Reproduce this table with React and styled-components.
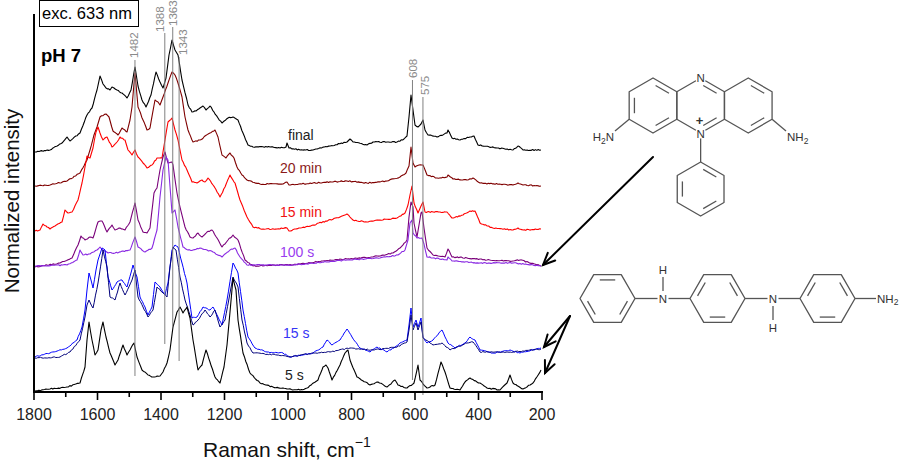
import React from "react";
import styled, { createGlobalStyle } from "styled-components";

const GlobalStyle = createGlobalStyle`
  html, body {
    margin: 0;
    padding: 0;
    background: #fff;
  }
`;

const FONT = `"Liberation Sans", Arial, sans-serif`;

const Figure = styled.div`
  position: relative;
  width: 899px;
  height: 460px;
  display: flex;
  background: #fff;
  font-family: ${FONT};
  overflow: hidden;
`;

const ChartPanel = styled.svg`
  display: block;
  flex: 0 0 560px;
  width: 560px;
  height: 460px;
`;

const Structures = styled.div`
  flex: 1 1 auto;
  display: flex;
  flex-direction: column;
  gap: 20px;
  padding-top: 60px;
`;

const MoleculeSvg = styled.svg`
  display: block;
  width: 339px;
  height: ${(p) => p.$h}px;
`;

const ArrowLayer = styled.svg`
  position: absolute;
  left: 0;
  top: 0;
  width: 899px;
  height: 460px;
  pointer-events: none;
`;

const AxisTitle = styled.text`
  font-family: ${FONT};
  font-size: ${(p) => p.$size || 21}px;
  fill: #111;
`;

const TickLabel = styled.text`
  font-family: ${FONT};
  font-size: 16px;
  fill: #222;
  text-anchor: middle;
`;

const CurveLabel = styled.text`
  font-family: ${FONT};
  font-size: 14px;
  fill: ${(p) => p.$color};
`;

const PeakLabel = styled.text`
  font-family: ${FONT};
  font-size: 11.5px;
  fill: #8a8a8a;
`;

const Note = styled.text`
  font-family: ${FONT};
  font-size: ${(p) => p.$size}px;
  font-weight: ${(p) => (p.$bold ? 700 : 400)};
  fill: #000;
`;

const Atom = styled.text`
  font-family: ${FONT};
  font-size: ${(p) => p.$size || 11.5}px;
  font-weight: ${(p) => (p.$bold ? 700 : 400)};
  fill: #333;
  text-anchor: ${(p) => p.$anchor || "middle"};
`;

const Spectrum = styled.path`
  fill: none;
  stroke: ${(p) => p.$color};
  stroke-width: ${(p) => p.$w || 1.1};
  stroke-linejoin: round;
`;

/* axis mapping */
const X0 = 34;
const X1 = 542;
const AXIS_Y = 392;
const xOf = (w) => X0 + ((1800 - w) * (X1 - X0)) / 1600;

/* spectra, read off in pixel coordinates */
const SPECTRA = [
  {
    key: "final",
    color: "#000",
    pts: [[35,152],[50,150],[62,143],[67,137],[70,141],[80,133],[87,115],[92,108],[97,90],[100,76],[103,84],[106,88],[110,90],[112,87],[114,88],[117,90],[122,93],[127,98],[131,90],[135,67],[138,86],[142,100],[146,107],[151,95],[156,72],[160,82],[163,88],[166,78],[169,55],[172,40],[175,50],[178,55],[182,80],[188,105],[192,112],[196,111],[200,108],[203,106],[206,110],[210,106],[214,112],[218,118],[222,123],[228,118],[233,117],[238,120],[243,133],[248,145],[253,147],[270,147],[280,148],[286,147],[287,143],[289,148],[300,150],[313,150],[330,146],[347,142],[350,139],[353,142],[367,145],[373,142],[397,142],[404,139],[407,136],[409,117],[411,95],[413,110],[415,125],[418,127],[421,124],[423,120],[425,130],[428,135],[437,137],[447,133],[448,130],[452,138],[460,140],[470,137],[474,136],[478,145],[497,148],[513,150],[518,146],[523,150],[541,150]],
  },
  {
    key: "20min",
    color: "#7f0000",
    pts: [[35,186],[50,185],[67,181],[80,173],[87,160],[90,150],[94,135],[97,127],[100,117],[106,114],[109,117],[113,131],[118,135],[122,128],[127,132],[130,120],[132,107],[135,73],[138,107],[143,120],[147,130],[150,128],[155,100],[158,102],[160,105],[163,97],[168,83],[172,72],[175,75],[178,83],[182,97],[185,117],[188,130],[193,142],[200,140],[210,133],[215,130],[218,137],[222,155],[226,158],[230,153],[234,158],[237,167],[242,175],[247,180],[260,184],[283,184],[287,182],[289,185],[313,183],[347,181],[367,183],[387,181],[400,177],[406,173],[409,166],[411,147],[413,163],[415,167],[419,165],[423,165],[427,175],[437,178],[447,177],[448,175],[453,179],[467,180],[473,178],[480,183],[513,185],[518,183],[523,185],[541,186]],
  },
  {
    key: "15min",
    color: "#ff0000",
    pts: [[35,231],[40,230],[43,224],[47,227],[50,229],[55,226],[62,222],[65,210],[68,213],[72,212],[78,200],[82,183],[85,167],[87,156],[90,158],[93,148],[96,132],[98,127],[100,133],[103,140],[107,137],[112,147],[117,142],[120,137],[125,140],[128,150],[132,155],[135,150],[138,157],[143,163],[147,168],[152,165],[157,158],[162,158],[165,140],[168,122],[172,118],[175,130],[178,140],[182,160],[187,170],[192,182],[197,183],[202,180],[205,182],[208,178],[213,185],[220,197],[225,187],[230,175],[235,183],[240,200],[247,217],[253,227],[263,229],[277,229],[287,228],[289,231],[313,225],[340,217],[347,214],[353,220],[367,222],[380,220],[397,218],[405,213],[408,205],[410,195],[412,186],[414,203],[418,213],[421,206],[423,202],[425,212],[433,212],[447,212],[452,218],[463,215],[470,211],[475,211],[480,223],[493,228],[513,230],[518,228],[523,230],[541,229]],
  },
  {
    key: "100s-a",
    color: "#7a007a",
    pts: [[35,267],[60,263],[72,258],[78,245],[81,236],[85,240],[90,237],[93,238],[98,222],[102,221],[107,232],[112,225],[115,230],[120,228],[125,230],[130,222],[135,203],[138,220],[143,232],[147,233],[150,228],[154,193],[157,188],[160,170],[163,157],[165,152],[168,163],[172,162],[173,165],[177,193],[180,207],[185,227],[190,237],[193,238],[198,233],[202,237],[207,232],[212,230],[217,238],[222,247],[228,240],[233,235],[238,240],[245,260],[253,266],[277,265],[293,265],[330,260],[347,259],[373,257],[393,253],[400,248],[407,240],[409,217],[411,202],[413,207],[414,223],[417,237],[419,225],[421,213],[422,212],[424,228],[427,248],[433,255],[445,257],[448,249],[452,257],[467,258],[487,260],[513,261],[520,260],[541,266]],
  },
  {
    key: "100s-b",
    color: "#8a2be2",
    pts: [[35,266],[67,265],[77,260],[80,250],[83,255],[90,254],[97,250],[100,247],[103,250],[108,253],[115,253],[130,250],[135,237],[138,247],[145,252],[152,248],[157,230],[160,197],[163,170],[166,157],[168,160],[172,213],[175,210],[178,227],[183,247],[188,250],[193,250],[200,248],[207,250],[213,252],[222,257],[230,250],[235,248],[240,257],[247,265],[293,265],[347,260],[380,258],[398,255],[405,250],[408,240],[410,223],[412,220],[413,233],[417,238],[422,238],[424,244],[427,257],[447,260],[448,257],[452,261],[480,263],[513,263],[541,266]],
  },
  {
    key: "15s-a",
    color: "#0000ff",
    w: 1,
    pts: [[35,357],[50,353],[67,348],[77,340],[82,327],[85,310],[87,290],[89,273],[91,280],[93,288],[96,270],[98,260],[102,248],[105,250],[108,277],[112,290],[117,282],[122,280],[127,287],[133,265],[137,277],[140,297],[145,307],[148,315],[152,307],[155,282],[160,287],[165,295],[168,283],[172,250],[175,245],[178,247],[182,263],[187,283],[192,318],[197,317],[203,307],[210,310],[213,307],[218,317],[222,325],[227,300],[233,263],[238,273],[243,310],[248,337],[255,348],[267,352],[283,353],[290,357],[313,353],[323,347],[327,340],[332,345],[340,340],[347,329],[352,337],[360,348],[370,352],[377,347],[387,352],[395,347],[400,343],[407,340],[409,325],[411,308],[413,327],[416,320],[418,327],[421,318],[423,337],[427,343],[433,340],[442,330],[448,343],[455,348],[465,343],[470,337],[475,340],[480,350],[493,353],[510,350],[520,353],[541,348]],
  },
  {
    key: "15s-b",
    color: "#00007a",
    w: 1,
    pts: [[35,358],[60,357],[70,352],[80,340],[85,317],[87,305],[89,300],[93,308],[98,283],[103,250],[107,267],[110,297],[115,300],[120,283],[125,295],[132,280],[135,270],[138,297],[143,307],[148,317],[153,310],[157,287],[162,292],[167,297],[170,267],[173,247],[176,250],[180,277],[185,300],[190,315],[193,325],[198,320],[205,310],[210,317],[215,310],[220,327],[225,320],[230,293],[233,277],[238,287],[242,320],[247,343],[253,353],[277,355],[290,357],[313,353],[330,352],[350,348],[373,350],[397,347],[407,342],[409,330],[411,315],[413,330],[416,323],[418,330],[421,322],[423,338],[433,345],[442,343],[450,350],[467,343],[473,342],[480,352],[513,352],[541,349]],
  },
  {
    key: "5s",
    color: "#000",
    pts: [[35,391],[50,389],[67,387],[80,383],[85,367],[87,340],[89,322],[92,340],[95,355],[98,350],[101,330],[103,322],[106,337],[110,353],[115,365],[118,360],[123,345],[127,355],[130,350],[134,343],[137,357],[142,370],[148,375],[153,377],[160,376],[163,372],[167,363],[170,350],[173,327],[177,312],[180,307],[183,313],[187,307],[190,318],[193,340],[198,370],[202,365],[206,350],[210,362],[215,377],[220,383],[224,367],[227,345],[230,312],[233,278],[236,290],[238,320],[243,353],[250,373],[260,383],[273,387],[287,389],[300,390],[307,388],[318,380],[323,367],[326,365],[328,368],[332,380],[340,365],[345,353],[348,350],[350,360],[357,377],[370,385],[378,382],[387,387],[395,380],[398,385],[407,388],[414,383],[418,365],[420,380],[427,388],[435,385],[441,362],[445,372],[450,388],[460,390],[465,382],[470,378],[477,382],[480,383],[487,388],[500,390],[507,383],[510,375],[513,383],[523,389],[533,383],[541,370]],
  },
];

const CURVE_LABELS = [
  { text: "final", x: 288, y: 140, color: "#222" },
  { text: "20 min", x: 280, y: 173, color: "#8b1a1a" },
  { text: "15 min", x: 280, y: 217, color: "#f01010" },
  { text: "100 s", x: 280, y: 257, color: "#9a3cf0" },
  { text: "15 s", x: 283, y: 338, color: "#3535f5" },
  { text: "5 s", x: 285, y: 380, color: "#222" },
];

// marker lines: label baseline x, label start y, line top and bottom
const PEAKS = [
  { w: 1482, tx: 138, ty: 58, top: 60, bottom: 376 },
  { w: 1388, tx: 164, ty: 32, top: 33, bottom: 344 },
  { w: 1363, tx: 177, ty: 26, top: 27, bottom: 327 },
  { w: 1343, tx: 187, ty: 55, top: 57, bottom: 361 },
  { w: 608, tx: 417, ty: 78, top: 80, bottom: 380 },
  { w: 575, tx: 429, ty: 95, top: 97, bottom: 395 },
];

function mulberry32(a) {
  return function () {
    a |= 0;
    a = (a + 0x6d2b79f5) | 0;
    let t = Math.imul(a ^ (a >>> 15), 1 | a);
    t = (t + Math.imul(t ^ (t >>> 7), 61 | t)) ^ t;
    return ((t ^ (t >>> 14)) >>> 0) / 4294967296;
  };
}

function jaggedPath(pts, seed, amp = 1.1) {
  const rnd = mulberry32(seed);
  let d = `M${pts[0][0]},${pts[0][1]}`;
  for (let i = 1; i < pts.length; i++) {
    const [ax, ay] = pts[i - 1];
    const [bx, by] = pts[i];
    const steps = Math.max(1, Math.round((bx - ax) / 1.4));
    for (let k = 1; k <= steps; k++) {
      const t = k / steps;
      const x = ax + (bx - ax) * t;
      const n = k < steps ? (rnd() - 0.5) * amp : 0;
      const y = ay + (by - ay) * t + n;
      d += `L${x.toFixed(2)},${y.toFixed(2)}`;
    }
  }
  return d;
}

/* chemistry drawing helpers */
const deg = Math.PI / 180;
function hexPointy(cx, cy, s) {
  return [-90, -30, 30, 90, 150, 210].map((a) => [cx + s * Math.cos(a * deg), cy + s * Math.sin(a * deg)]);
}
function hexFlat(cx, cy, s) {
  return [0, 60, 120, 180, 240, 300].map((a) => [cx + s * Math.cos(a * deg), cy + s * Math.sin(a * deg)]);
}
function Ring({ v, inner, cx, cy }) {
  const pts = v.map((p) => p.map((n) => n.toFixed(2)).join(",")).join(" ");
  return (
    <g>
      <polygon points={pts} fill="none" stroke="#555" strokeWidth="1.3" strokeLinejoin="round" />
      {inner.map((e) => {
        const shrink = (p) => [cx + (p[0] - cx) * 0.78, cy + (p[1] - cy) * 0.78];
        const pa = shrink(v[e]);
        const pb = shrink(v[(e + 1) % 6]);
        const ex = (pb[0] - pa[0]) * 0.14;
        const ey = (pb[1] - pa[1]) * 0.14;
        return (
          <line key={e} x1={pa[0] + ex} y1={pa[1] + ey} x2={pb[0] - ex} y2={pb[1] - ey} stroke="#555" strokeWidth="1.3" />
        );
      })}
    </g>
  );
}
const Bond = ({ x1, y1, x2, y2 }) => <line x1={x1} y1={y1} x2={x2} y2={y2} stroke="#555" strokeWidth="1.3" />;

function Phenosafranine() {
  const s = 27.5;
  const hw = s * Math.cos(30 * deg);
  const cy = 105.5;
  const cl = 653;
  const cm = cl + 2 * hw;
  const cr = cm + 2 * hw;
  const L = hexPointy(cl, cy, s);
  const M = hexPointy(cm, cy, s);
  const R = hexPointy(cr, cy, s);
  const pcy = cy + s + 29 + 27;
  const P = hexPointy(cm, pcy, 27);
  return (
    <MoleculeSvg $h={170} viewBox="560 60 339 170">
      <Ring v={L} inner={[0, 2, 4]} cx={cl} cy={cy} />
      <Ring v={M} inner={[0, 2]} cx={cm} cy={cy} />
      <Ring v={R} inner={[0, 2]} cx={cr} cy={cy} />
      <Bond x1={L[4][0]} y1={L[4][1]} x2={615} y2={131} />
      <Bond x1={R[2][0]} y1={R[2][1]} x2={786} y2={131} />
      <Bond x1={cm} y1={cy + s + 5} x2={cm} y2={cy + s + 29} />
      <Ring v={P} inner={[0, 2, 4]} cx={cm} cy={pcy} />
      <circle cx={cm} cy={cy - s} r="5.5" fill="#fff" />
      <Atom x={cm} y={cy - s + 4.2}>N</Atom>
      <circle cx={cm} cy={cy + s} r="5.5" fill="#fff" />
      <Atom x={cm} y={cy + s + 4.6}>N</Atom>
      <Atom x={cm - 1} y={cy + s - 8} $size={13} $bold>
        +
      </Atom>
      <Atom x={614} y={141} $anchor="end">
        H<tspan fontSize="8.5" dy="2.5">2</tspan>
        <tspan dy="-2.5">N</tspan>
      </Atom>
      <Atom x={787} y={141} $anchor="start">
        NH<tspan fontSize="8.5" dy="2.5">2</tspan>
      </Atom>
    </MoleculeSvg>
  );
}

function Trimer() {
  const s = 27.5;
  const cy = 298.5;
  const c1 = 607.5;
  const c2 = 717.5;
  const c3 = 827.5;
  const R1 = hexFlat(c1, cy, s);
  const R2 = hexFlat(c2, cy, s);
  const R3 = hexFlat(c3, cy, s);
  return (
    <MoleculeSvg $h={95} viewBox="560 250 339 95">
      <Ring v={R1} inner={[4, 0, 2]} cx={c1} cy={cy} />
      <Ring v={R2} inner={[3, 5, 1]} cx={c2} cy={cy} />
      <Ring v={R3} inner={[3, 5, 1]} cx={c3} cy={cy} />
      <Bond x1={c1 + s} y1={cy} x2={657.5} y2={cy} />
      <Bond x1={668.5} y1={cy} x2={c2 - s} y2={cy} />
      <Bond x1={663} y1={291} x2={663} y2={277} />
      <Atom x={663} y={cy + 4.2}>N</Atom>
      <Atom x={663} y={274}>H</Atom>
      <Bond x1={c2 + s} y1={cy} x2={767.5} y2={cy} />
      <Bond x1={778.5} y1={cy} x2={c3 - s} y2={cy} />
      <Bond x1={773} y1={306} x2={773} y2={320} />
      <Atom x={773} y={cy + 4.2}>N</Atom>
      <Atom x={773} y={332}>H</Atom>
      <Bond x1={c3 + s} y1={cy} x2={876} y2={cy} />
      <Atom x={877} y={cy + 4.2} $anchor="start">
        NH<tspan fontSize="8.5" dy="2.5">2</tspan>
      </Atom>
    </MoleculeSvg>
  );
}

function Arrow({ x1, y1, x2, y2 }) {
  const ang = Math.atan2(y2 - y1, x2 - x1);
  const len = 13;
  const spread = 24 * deg;
  const h1 = [x2 - len * Math.cos(ang - spread), y2 - len * Math.sin(ang - spread)];
  const h2 = [x2 - len * Math.cos(ang + spread), y2 - len * Math.sin(ang + spread)];
  return (
    <g stroke="#000" strokeWidth="2" strokeLinecap="round" fill="none">
      <line x1={x1} y1={y1} x2={x2} y2={y2} />
      <polyline points={`${h1[0]},${h1[1]} ${x2},${y2} ${h2[0]},${h2[1]}`} strokeLinejoin="miter" />
    </g>
  );
}

function Chart() {
  const ticks = [];
  for (let w = 1800; w >= 200; w -= 100) ticks.push(w);
  return (
    <ChartPanel viewBox="0 0 560 460">
      <AxisTitle $size={20.5} transform="translate(19,201) rotate(-90)" textAnchor="middle">
        Normalized intensity
      </AxisTitle>

      {SPECTRA.map((s, i) => (
        <Spectrum key={s.key} d={jaggedPath(s.pts, 17 + i * 31)} $color={s.color} $w={s.w} />
      ))}

      {PEAKS.map((p) => (
        <g key={p.w}>
          <line x1={xOf(p.w)} y1={p.top} x2={xOf(p.w)} y2={p.bottom} stroke="#808080" strokeWidth="1" />
          <PeakLabel transform={`translate(${p.tx},${p.ty}) rotate(-90)`}>{p.w}</PeakLabel>
        </g>
      ))}

      {CURVE_LABELS.map((l) => (
        <CurveLabel key={l.text} x={l.x} y={l.y} $color={l.color}>
          {l.text}
        </CurveLabel>
      ))}

      <line x1={X0} y1={14} x2={X0} y2={AXIS_Y + 1} stroke="#000" strokeWidth="2" />
      <line x1={X0 - 1} y1={AXIS_Y} x2={X1 + 1} y2={AXIS_Y} stroke="#000" strokeWidth="2" />
      {ticks.map((w) => (
        <line
          key={w}
          x1={xOf(w)}
          y1={AXIS_Y}
          x2={xOf(w)}
          y2={AXIS_Y + (w % 200 === 0 ? 8 : 5)}
          stroke="#000"
          strokeWidth="1.6"
        />
      ))}
      {ticks
        .filter((w) => w % 200 === 0)
        .map((w) => (
          <TickLabel key={w} x={xOf(w)} y={420}>
            {w}
          </TickLabel>
        ))}

      <AxisTitle x={203} y={457}>
        Raman shift, cm<tspan fontSize="14" dy="-10">−1</tspan>
      </AxisTitle>

      <rect x={39.5} y={0.5} width={99} height={26} fill="#fff" stroke="#000" strokeWidth="1" />
      <Note x={42} y={19} $size={16.5}>
        exc. 633 nm
      </Note>
      <Note x={41} y={62} $size={18.5} $bold>
        pH 7
      </Note>
    </ChartPanel>
  );
}

export default function App() {
  return (
    <>
      <GlobalStyle />
      <Figure>
        <Chart />
        <Structures>
          <Phenosafranine />
          <Trimer />
        </Structures>
        <ArrowLayer viewBox="0 0 899 460">
          <Arrow x1={653} y1={157} x2={543} y2={265} />
          <Arrow x1={570} y1={316} x2={544} y2={347} />
          <Arrow x1={570} y1={316} x2={545} y2={373} />
        </ArrowLayer>
      </Figure>
    </>
  );
}
